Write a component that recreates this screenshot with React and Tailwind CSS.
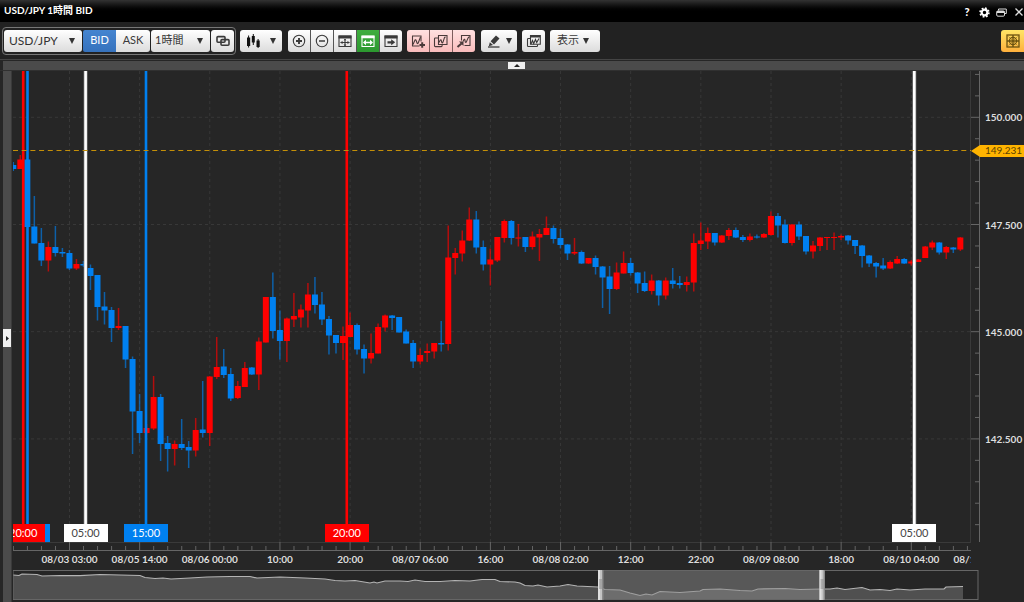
import React from "react";
import { clsx } from "clsx";

const RED = "#ff0000";
const BLUE = "#0080f0";

// [direction, body top, body bottom, high, low] in plot units
const CANDLES = [
  ["d", 165, 169, 162, 171], ["u", 159.5, 169, 155, 169], ["d", 159.5, 227, 159, 227],
  ["d", 226.5, 243.5, 196, 243.5], ["d", 243, 260.5, 228, 266], ["u", 247, 260.5, 241.5, 271.5],
  ["d", 247, 253, 226, 256.5], ["d", 252, 253.5, 248, 257], ["d", 253, 268.5, 250, 270],
  ["u", 264, 268.5, 259, 270], ["d", 264, 265.5, 261, 267], ["d", 268, 276, 264.5, 290],
  ["d", 275, 307, 275, 320.5], ["d", 306.5, 310.5, 292, 324.5], ["d", 310, 328, 307, 342],
  ["u", 326, 328, 308, 330], ["d", 326, 359.5, 326, 368], ["d", 359, 411.5, 356.5, 454],
  ["d", 411, 433, 394, 443], ["u", 428, 433, 424, 434], ["u", 397, 428.5, 376, 430],
  ["d", 397, 444, 394, 461], ["d", 443, 449, 436, 471.5], ["u", 444, 449, 440.5, 465.5],
  ["d", 444, 448, 419, 450], ["d", 447, 450.5, 441, 468], ["u", 430, 450.5, 418, 456.5],
  ["d", 429.5, 433, 381, 437.5], ["u", 376.5, 433, 376, 446], ["u", 367, 377, 337, 379],
  ["d", 366.5, 375, 349, 378], ["d", 374, 398.5, 368, 401], ["u", 386, 398, 381, 399],
  ["u", 368, 387, 362, 387], ["d", 367.5, 374.5, 367, 375], ["u", 341.5, 374.5, 337.5, 390],
  ["u", 297, 342.5, 297, 342.5], ["d", 297, 331, 272.5, 338.5], ["d", 330, 341, 310.5, 359.5],
  ["u", 318.5, 341, 317.5, 362], ["u", 316, 319.5, 293, 327], ["u", 309.5, 317.5, 304.5, 327.5],
  ["u", 294.5, 310.5, 283, 327.5], ["d", 294.5, 305, 277, 313.5], ["d", 304.5, 319.5, 292, 325],
  ["d", 319, 335.5, 316, 354.5], ["d", 335, 343, 335, 353.5], ["u", 336, 343, 326.5, 360],
  ["u", 325, 337, 312.5, 337], ["d", 325, 349.5, 323.5, 354.5], ["d", 349, 358.5, 344.5, 373.5],
  ["u", 353, 358.5, 333.5, 363.5], ["u", 327, 353.5, 323.5, 353.5], ["u", 315.5, 327.5, 314.5, 331.5],
  ["d", 315.5, 318, 315, 330], ["d", 317, 332.5, 317, 332.5], ["d", 331.5, 343.5, 329.5, 343.5],
  ["d", 343, 361.5, 340, 368], ["u", 355, 361.5, 348.5, 364.5], ["u", 351, 353, 343.5, 362],
  ["u", 343, 351.5, 343, 358.5], ["d", 343, 344.5, 321, 351.5], ["u", 257.5, 344, 225.5, 350.5],
  ["u", 253, 258, 248, 274.5], ["u", 240.5, 253.5, 230.5, 261.5], ["u", 219.5, 240.5, 207.5, 241],
  ["d", 219.5, 247.5, 211, 253.5], ["d", 247, 264.5, 240.5, 270.5], ["u", 259.5, 264.5, 248.5, 285.5],
  ["u", 237, 260.5, 237, 262], ["u", 221, 238, 219.5, 242.5], ["d", 221, 238, 220, 244.5],
  ["u", 237.5, 238.5, 224, 246.5], ["d", 237, 247, 237, 252], ["u", 236.5, 247, 231.5, 249.5],
  ["u", 234, 237.5, 229, 261], ["u", 228, 235, 216.5, 235], ["d", 228, 239, 225.5, 243.5],
  ["d", 238, 245, 229, 248.5], ["d", 244.5, 253.5, 244, 260], ["u", 252, 253.5, 238, 255],
  ["d", 252, 263.5, 250.5, 264], ["u", 258, 263.5, 258, 264], ["d", 258, 267, 255.5, 274.5],
  ["d", 266.5, 277.5, 266, 308], ["d", 276.5, 289, 266, 314], ["u", 272.5, 289, 262.5, 290],
  ["u", 263, 273.5, 251.5, 273.5], ["d", 263, 273, 258, 275.5], ["d", 272.5, 283.5, 272, 293],
  ["d", 283, 291, 271.5, 292], ["u", 280.5, 291, 274.5, 294.5], ["d", 280.5, 295.5, 280, 305.5],
  ["u", 280.5, 295.5, 277.5, 299.5], ["d", 280.5, 284, 268, 288.5], ["d", 283, 285, 276, 288.5],
  ["u", 282, 285, 276.5, 291.5], ["u", 243, 282.5, 233.5, 291.5], ["u", 240.5, 244, 222.5, 250],
  ["u", 233, 241.5, 227.5, 249], ["d", 233, 242.5, 233, 245.5], ["u", 235.5, 242.5, 235, 243],
  ["u", 230, 236, 228, 240], ["d", 230, 237.5, 227.5, 238], ["d", 237, 240, 235, 242],
  ["u", 236.5, 240, 233.5, 241.5], ["d", 236.5, 237.5, 234.5, 238.5], ["u", 234, 237.5, 233, 238],
  ["u", 216, 235, 211.5, 235.5], ["d", 216, 225.5, 213, 237.5], ["d", 224.5, 243, 219.5, 243.5],
  ["u", 224.5, 243, 224, 245.5], ["d", 224.5, 236.5, 221.5, 240], ["d", 236, 251.5, 236, 254.5],
  ["u", 245.5, 251.5, 241, 258.5], ["u", 237.5, 246, 237, 251], ["u", 237, 238, 237, 250],
  ["u", 237, 238, 232.5, 250], ["u", 236, 237.5, 234.5, 240], ["d", 235.5, 240.5, 235, 244.5],
  ["d", 240, 246, 240, 254], ["d", 245.5, 256, 245, 267.5], ["d", 255.5, 263.5, 255, 267],
  ["d", 263, 266.5, 262, 277.5], ["d", 265.5, 268.5, 258, 270], ["u", 262, 268.5, 260.5, 269],
  ["u", 259, 263.5, 256, 264], ["d", 259, 263.5, 258, 264], ["u", 261.5, 263.5, 260, 265.5],
  ["u", 259.5, 262, 259, 262], ["u", 246.5, 258, 246, 258], ["u", 242.5, 247.5, 240.5, 250],
  ["d", 242.5, 252.5, 242, 254.5], ["u", 247, 252.5, 246, 259], ["d", 247.5, 249.5, 247, 253],
  ["u", 237.5, 249.5, 237, 251],
];

const PLOT = { left: 13, top: 71, width: 958, height: 471 };
const STEP = 7.015;
const FIRST_MAJOR = 69.5;
const MAJOR_GAP = 70.15;

const TIMES = [
  "08/03 03:00", "08/05 14:00", "08/06 00:00", "10:00", "20:00", "08/07 06:00", "16:00",
  "08/08 02:00", "12:00", "22:00", "08/09 08:00", "18:00", "08/10 04:00", "08/11 00:00",
];

const PRICES = [
  { label: "150.000", y: 117.3 },
  { label: "147.500", y: 224.5 },
  { label: "145.000", y: 331.7 },
  { label: "142.500", y: 438.9 },
];

// the first flag sits under the second one, so it carries no text
const MARKERS = [
  { x: 27.5, time: "", color: BLUE, flag: "bg-[#0080f0]" },
  { x: 23.2, time: "20:00", color: RED, flag: "bg-[#ff0000] text-white" },
  { x: 85.6, time: "05:00", color: "#ffffff", flag: "bg-white text-[#444]" },
  { x: 146, time: "15:00", color: BLUE, flag: "bg-[#0080f0] text-white" },
  { x: 346.8, time: "20:00", color: RED, flag: "bg-[#ff0000] text-white" },
  { x: 914.3, time: "05:00", color: "#ffffff", flag: "bg-white text-[#444]" },
];

const HISTORY =
  "13,575 19,575.5 22,574 37,574.5 42,576 60,575.5 80,575.7 100,574.5 120,575 140,575.5 145,577.5 155,578.5 163,578 171,579 190,578 207,577 230,576.5 250,576.5 257,578 280,577 305,578 325,579 335,580.5 345,581 355,580.5 370,583 374,582 377,583 385,581 400,581 408,581.5 415,580 425,581.5 440,581.5 455,580.5 470,581 482,579.5 495,579.5 500,581.5 515,582 520,583 525,585.5 533,586 538,585 547,587 560,586 568,584.5 577,586 598,587 605,589.5 620,590 630,593 640,595.5 646,594 652,595 660,591.5 680,592.5 700,591 703,589.5 720,589 740,590.5 752,591 758,589 785,588.5 800,589.5 822,589 830,589 837,588 845,589.5 862,587.5 870,590 880,589.5 890,590.5 897,589 910,590 925,589 944,589 946,587 963,586.5";

const pctX = (x) => `${((x - PLOT.left) / PLOT.width) * 100}%`;
const pctY = (y) => `${((y - PLOT.top) / PLOT.height) * 100}%`;

const TONES = {
  light: "from-white to-[#dcdcdc] text-[#3a3a3a]",
  blue: "from-[#4585d0] to-[#3672bd] text-white",
  green: "from-[#3fae3f] to-[#2c982f] text-white",
  pink: "from-[#ffe0e0] to-[#f9bcbc] text-[#4a3a3a]",
  gold: "from-[#ffe566] to-[#ffb03c] text-[#6b5210]",
};

const Caret = ({ className }) => (
  <svg className={clsx("h-[6px] w-[6px] fill-[#333]", className)} viewBox="0 0 6 6" aria-hidden="true">
    <path d="M0 0h6L3 6z" />
  </svg>
);

const Icon = ({ children }) => (
  <svg
    className="h-4 w-4 shrink-0"
    viewBox="0 0 16 16"
    fill="none"
    stroke="currentColor"
    strokeWidth="1.1"
    aria-hidden="true"
  >
    {children}
  </svg>
);

const ToolButton = ({ label, tone = "light", className, children }) => (
  <button
    type="button"
    aria-label={label}
    className={clsx("flex h-[22px] items-center justify-center bg-linear-to-b", TONES[tone], className)}
  >
    {children}
  </button>
);

const SelectBox = ({ label, value, className, textClass }) => (
  <div className={clsx("relative flex", className)}>
    <select
      aria-label={label}
      defaultValue={value}
      className={clsx(
        "h-[22px] w-full appearance-none rounded-[3px] bg-linear-to-b from-white to-[#dcdcdc] text-[#333]",
        textClass
      )}
    >
      <option>{value}</option>
    </select>
    <Caret className="pointer-events-none absolute top-2 right-[7px]" />
  </div>
);

const TitleBar = () => (
  <header className="flex h-[22px] items-center justify-between bg-linear-to-b from-[#333] to-black to-60% pl-1 text-white">
    <h1 className="pb-[2px] text-[10px] leading-4 font-bold">USD/JPY 1時間 BID</h1>
    <div className="flex items-center gap-[5px] pt-[2px]">
      <button type="button" aria-label="Help" className="w-3 text-[11px] leading-4 font-black">?</button>
      <button type="button" aria-label="Settings" className="flex w-3 justify-center">
        <svg className="h-[11px] w-[11px]" viewBox="0 0 12 12" fill="none" stroke="#fff" aria-hidden="true">
          <circle cx="6" cy="6" r="3.1" strokeWidth="2.4" />
          <circle cx="6" cy="6" r="4.8" strokeWidth="1.8" strokeDasharray="1.9 1.87" />
        </svg>
      </button>
      <button type="button" aria-label="Restore" className="flex w-3 justify-center">
        <svg className="h-[9px] w-[11px]" viewBox="0 0 11 9" fill="none" stroke="#ddd" aria-hidden="true">
          <path d="M2.5 2.500V1h7.800v4.500H8.500" />
          <rect x=".7" y="3" width="7.800" height="5.200" rx="1.200" />
          <path d="M.7 4h7.800" strokeWidth="2" />
        </svg>
      </button>
      <button type="button" aria-label="Close" className="flex w-3 justify-end pr-px">
        <svg className="h-[8px] w-[8px]" viewBox="0 0 8 8" stroke="#ddd" strokeWidth="1.300" aria-hidden="true">
          <path d="M.5.5l7 7M7.500.5l-7 7" />
        </svg>
      </button>
    </div>
  </header>
);

const Toolbar = () => (
  <div className="flex h-[37px] items-center justify-between bg-[#222]">
    <div className="flex items-center">
      <div className="ml-[2px] flex h-[28px] items-center gap-px rounded-[4px] border border-[#777] px-px">
        <SelectBox label="Pair" value="USD/JPY" className="w-[78px]" textClass="pl-[5px] text-[12px]" />
        <div className="flex">
          <ToolButton label="BID" tone="blue" className="w-[33px] rounded-l-[2px] text-[11px]">BID</ToolButton>
          <ToolButton label="ASK" className="w-[34px] rounded-r-[3px] text-[11px]">ASK</ToolButton>
        </div>
        <SelectBox label="Period" value="1時間" className="w-[59px]" textClass="pl-1 text-[11px]" />
        <ToolButton label="Link" className="w-[23px] rounded-[3px]">
          <Icon>
            <rect x="2" y="3.600" width="8" height="5.600" rx="1" strokeWidth="1.600" />
            <rect x="6" y="6.600" width="8" height="5.600" rx="1" strokeWidth="1.600" />
          </Icon>
        </ToolButton>
      </div>

      <ToolButton label="Chart type" className="ml-1 w-[42px] gap-[10px] rounded-[3px]">
        <svg className="h-[14px] w-[13px]" viewBox="0 0 13 14" fill="#111" aria-hidden="true">
          <path d="M0 3.500h3.200v8.500H0zM1.100 1.500h1v12h-1zM4.800 2h3v6.500h-3zM5.800 0h1v11h-1zM9.500 6.500h3.200v6.500H9.500zM10.600 5h1v9h-1z" />
        </svg>
        <Caret />
      </ToolButton>

      <div className="ml-[6px] flex gap-px overflow-hidden rounded-[3px] bg-[#555]">
        <ToolButton label="Zoom in" className="w-[22px]">
          <Icon><circle cx="8" cy="8" r="5.700" /><path d="M5 8h6M8 5v6" strokeWidth="1.900" /></Icon>
        </ToolButton>
        <ToolButton label="Zoom out" className="w-[22px]">
          <Icon><circle cx="8" cy="8" r="5.700" /><path d="M5 8h6" strokeWidth="1.500" /></Icon>
        </ToolButton>
        <ToolButton label="Fit all" className="w-[22px]">
          <Icon>
            <path d="M2 3h12v10.500H2z" />
            <path d="M1.500 4h13" strokeWidth="3" />
            <path d="M3.500 9.500h9M8 6v7" />
            <path d="M5.500 7.800L3.500 9.500l2 1.700zM10.500 7.800l2 1.700-2 1.700z" fill="currentColor" stroke="none" />
            <path d="M6.600 7.300L8 5.700l1.400 1.600zM6.600 11.600L8 13.200l1.400-1.600z" fill="currentColor" stroke="none" />
          </Icon>
        </ToolButton>
        <ToolButton label="Fit width" tone="green" className="w-[22px]">
          <Icon>
            <path d="M2 3h12v10.500H2z" />
            <path d="M1.500 4h13" strokeWidth="2.600" />
            <path d="M4 9.500h8" strokeWidth="1.400" />
            <path d="M6 6.800L3 9.500l3 2.700zM10 6.800l3 2.700-3 2.700z" fill="currentColor" stroke="none" />
          </Icon>
        </ToolButton>
        <ToolButton label="Scroll to latest" className="w-[22px]">
          <Icon>
            <path d="M2 3h12v10.500H2z" />
            <path d="M1.500 4h13" strokeWidth="3" />
            <path d="M4.500 9.300h4.500" strokeWidth="2.200" />
            <path d="M8.200 6.300l4 3-4 3z" fill="currentColor" stroke="none" />
          </Icon>
        </ToolButton>
      </div>

      <div className="ml-[5px] flex gap-px overflow-hidden rounded-[3px] bg-[#7c5c5c]">
        <ToolButton label="Add indicator" tone="pink" className="w-[22px]">
          <Icon>
            <path d="M9.500 13H2.500V3h8.500v5.500" />
            <path d="M3 11.500l2-4.500q.8-.8 1.200.5l.9 2.700q.6 1 1.200-.4L10.500 4" />
            <path d="M9.500 12h5.500M12.200 9.300v5.400" strokeWidth="2" />
          </Icon>
        </ToolButton>
        <ToolButton label="Indicator sets" tone="pink" className="w-[22px]">
          <Icon>
            <path d="M5 5H2.300q-.8 0-.8.8v7q0 .8.800.8h6q.8 0 .8-.8v-1" />
            <path d="M5.500 2.500H14v9H5.500z" />
            <path d="M6 9.500l1.300-2.500q.7-.8 1 .5l.5 2q.6 1 1.200-.4l1.500-4.500 1-.8" />
          </Icon>
        </ToolButton>
        <ToolButton label="Remove indicator" tone="pink" className="w-[22px]">
          <Icon>
            <path d="M5.500 7.500V2.500H14v10H8.500" />
            <path d="M7 8.500l1-2q.6-.6.9.5l.4 2q.6 1 1.200-.4L12 5l1.500-1.500" />
            <path d="M1.500 14l4-3.500" strokeWidth="2" />
            <path d="M3 8.500h4.500V13z" fill="currentColor" stroke="none" />
          </Icon>
        </ToolButton>
      </div>

      <ToolButton label="Draw" className="ml-[6px] w-[36px] gap-1 rounded-[3px]">
        <Icon>
          <path d="M4.600 8.300L10 2.500l3.500 3L8 11.500z" fill="currentColor" stroke="none" />
          <path d="M3.800 9.200l3.200 2.900-4.200 1.200z" fill="currentColor" stroke="none" />
          <path d="M2 14h11.500" strokeWidth="1.300" />
        </Icon>
        <Caret />
      </ToolButton>
      <ToolButton label="Windows" className="ml-[5px] w-[23px] rounded-[3px]">
        <Icon>
          <path d="M4 5.500H2.300q-.8 0-.8.8v6.400q0 .8.800.8h8.400q.8 0 .8-.8V11.500" />
          <path d="M4.500 11.300V2.500h9.800v8.800z" />
          <path d="M4.500 3.500h9.800" strokeWidth="2" />
          <path d="M5 11l1.500-3.500 1.200 3L9.500 6.500l1.200 3 2.300-4" />
        </Icon>
      </ToolButton>
      <ToolButton label="表示" className="ml-[5px] w-[50px] gap-1 rounded-[3px] pr-1 text-[11px]">
        表示
        <Caret />
      </ToolButton>
    </div>
    <ToolButton label="Layout" tone="gold" className="w-[23px] rounded-l-[3px]">
      <Icon>
        <rect x="2" y="2" width="12" height="12" strokeWidth="1.300" />
        <path d="M8 2v12M2 8h12" strokeWidth="1.400" />
        <circle cx="8" cy="8" r="3.600" />
        <path d="M3.500 3.500l9 9M12.500 3.500l-9 9" strokeWidth=".5" />
      </Icon>
    </ToolButton>
  </div>
);

const Plot = () => {
  const right = PLOT.left + PLOT.width;
  const bottom = PLOT.top + PLOT.height;
  return (
    <div className="relative min-w-0 flex-1 overflow-hidden">
      <svg
        className="absolute inset-0 h-full w-full"
        viewBox={`${PLOT.left} ${PLOT.top} ${PLOT.width} ${PLOT.height}`}
        preserveAspectRatio="none"
        aria-hidden="true"
      >
        <g stroke="#383838" strokeDasharray="3 3">
          {PRICES.map((p) => (
            <line key={p.label} x1={PLOT.left} x2={right} y1={p.y} y2={p.y} />
          ))}
          {TIMES.slice(0, 13).map((t, i) => (
            <line
              key={t + i}
              x1={FIRST_MAJOR + i * MAJOR_GAP}
              x2={FIRST_MAJOR + i * MAJOR_GAP}
              y1={PLOT.top}
              y2={bottom}
            />
          ))}
        </g>
        <line x1={right - 0.5} x2={right - 0.5} y1={PLOT.top} y2={bottom} stroke="#3a3a3a" />
        {CANDLES.map(([dir, top, low, high, tail], i) => {
          const x = 13.3 + i * STEP;
          const color = dir === "u" ? RED : BLUE;
          return (
            <g key={i}>
              <line x1={x} x2={x} y1={high} y2={tail} stroke={color} strokeWidth="1.5" opacity="0.65" />
              <rect x={x - 3} y={top} width="6" height={low - top} fill={color} />
            </g>
          );
        })}
        {MARKERS.map((m) => (
          <g key={m.x}>
            {m.color === "#ffffff" && (
              <line x1={m.x} x2={m.x} y1={PLOT.top} y2={bottom} stroke="#777" strokeWidth="4" />
            )}
            <line x1={m.x} x2={m.x} y1={PLOT.top} y2={bottom} stroke={m.color} strokeWidth="2.6" />
          </g>
        ))}
        <line x1={PLOT.left} x2={right} y1="150.5" y2="150.5" stroke="#c48f08" strokeDasharray="5 3.7" />
      </svg>
      {MARKERS.map((m) => (
        <span
          key={m.x}
          className={clsx(
            "absolute bottom-0 h-[18px] w-[44px] -translate-x-1/2 text-center text-[11px] leading-[17px]",
            m.flag
          )}
          style={{ left: pctX(m.x) }}
        >
          {m.time}
        </span>
      ))}
    </div>
  );
};

const PriceAxis = () => (
  <div className="relative w-[53px] shrink-0 overflow-hidden text-[10px] leading-4 text-[#ddd]">
    <svg
      className="absolute top-0 left-0 h-full w-[9px]"
      viewBox={`0 ${PLOT.top} 9 ${PLOT.height}`}
      preserveAspectRatio="none"
      stroke="#666"
      aria-hidden="true"
    >
      <line x1="8.5" x2="8.5" y1={PLOT.top} y2={PLOT.top + PLOT.height} />
      {Array.from({ length: 22 }).map((_, i) => {
        const y = 74.42 + i * 21.44;
        return <line key={i} x1={i % 5 === 2 ? 0 : 4} x2="8" y1={y} y2={y} />;
      })}
    </svg>
    {PRICES.map((p) => (
      <span
        key={p.label}
        className="absolute left-[14px] -translate-y-1/2 font-bold"
        style={{ top: pctY(p.y) }}
      >
        {p.label}
      </span>
    ))}
    <div className="absolute right-0 left-0 flex -translate-y-1/2" style={{ top: pctY(150.5) }}>
      <svg className="h-[12px] w-[9px] shrink-0 fill-[#ffb400]" viewBox="0 0 9 12" aria-hidden="true">
        <path d="M0 6L9 0v12z" />
      </svg>
      <span className="h-[12px] flex-1 bg-[#ffb400] pl-[5px] leading-[11px] text-[#5c4200]">149.231</span>
    </div>
  </div>
);

const TimeAxis = () => (
  <div className="relative mr-[53px] h-[28px] overflow-hidden">
    <svg
      className="absolute top-0 left-0 h-[9px] w-full"
      viewBox={`${PLOT.left} 0 ${PLOT.width} 9`}
      preserveAspectRatio="none"
      stroke="#666"
      aria-hidden="true"
    >
      <line x1="13" x2="971" y1=".5" y2=".5" stroke="#3a3a3a" />
      <line x1="13" x2="971" y1="8.5" y2="8.5" />
      {Array.from({ length: 69 }).map((_, i) => {
        const x = 13.38 + i * 14.03;
        return <line key={i} x1={x} x2={x} y1={i % 5 === 4 ? 0 : 4} y2="8" />;
      })}
    </svg>
    {TIMES.map((t, i) => (
      <span
        key={t + i}
        className="absolute top-[9px] -translate-x-1/2 text-[10px] leading-4 font-bold whitespace-nowrap text-[#ddd]"
        style={{ left: pctX(FIRST_MAJOR + i * MAJOR_GAP) }}
      >
        {t}
      </span>
    ))}
  </div>
);

const Grip = ({ x }) => (
  <g>
    <rect x={x} y="570" width="5" height="30" fill="#c4c4c4" />
    <rect x={x} y="570" width="2" height="30" fill="#e0e0e0" />
    <rect x={x + 4} y="570" width="1.5" height="30" fill="#8a8a8a" />
    <path d={`M${x + 1} 580h3m-3 2h3m-3 2h3m-3 2h3m-3 2h3`} stroke="#777" strokeWidth=".8" />
  </g>
);

const Navigator = () => (
  <div className="mr-[45px] mb-[2px] h-[30px]">
    <svg className="h-full w-full" viewBox="13 570 966 30" preserveAspectRatio="none" aria-hidden="true">
      <polygon points={`13,600 ${HISTORY} 963,600`} fill="#505050" />
      <polyline points={HISTORY} fill="none" stroke="#b4b4b4" strokeWidth="1.2" />
      <rect x="600" y="570" width="222" height="30" fill="#8a8a8a" opacity="0.5" />
      <rect x="13" y="570.5" width="965" height="29" fill="none" stroke="#666" />
      <Grip x={598} />
      <Grip x={819.5} />
    </svg>
  </div>
);

const App = () => {
  return (
    <div className="flex min-h-screen flex-col overflow-hidden bg-[#262626] font-[Lato,'Noto_Sans_CJK_JP',sans-serif]">
      <TitleBar />
      <Toolbar />
      <div className="border-y border-t-[#444] border-b-[#303030] pt-px pl-[3px]">
        <div className="flex h-[9px] items-center justify-center bg-[#4b4b4b] pl-[6px]">
          <button
            type="button"
            aria-label="Collapse toolbar"
            className="flex h-[7px] w-[17px] items-center justify-center bg-[#f0f0f0]"
          >
            <svg className="h-[3px] w-[6px]" viewBox="0 0 6 3" aria-hidden="true">
              <path d="M0 3h6L3 0z" fill="#222" />
            </svg>
          </button>
        </div>
      </div>
      <main className="flex flex-1 pl-[3px]">
        <div className="mr-px flex w-[9px] shrink-0 items-center border-r border-[#3a3a3a] bg-[#4b4b4b] pt-[3px]">
          <button
            type="button"
            aria-label="Open side panel"
            className="flex h-[18px] w-[8px] items-center justify-center bg-[#f0f0f0]"
          >
            <svg className="h-[5px] w-[3px]" viewBox="0 0 3 5" aria-hidden="true">
              <path d="M0 0v5l3-2.5z" fill="#222" />
            </svg>
          </button>
        </div>
        <div className="flex min-w-0 flex-1 flex-col">
          <div className="flex min-h-[240px] flex-1">
            <Plot />
            <PriceAxis />
          </div>
          <TimeAxis />
          <Navigator />
        </div>
      </main>
    </div>
  );
};

export default App;
